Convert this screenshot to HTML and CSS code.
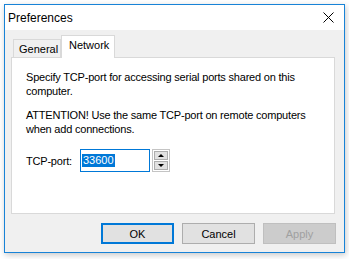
FILE: index.html
```html
<!DOCTYPE html>
<html lang="en">
<head>
<meta charset="UTF-8">
<title>Preferences</title>
<link rel="stylesheet" href="styles.css">
</head>
<body>

<div class="window">
    <!-- TITLE BAR -->
    <div class="titlebar">
        <span class="title">Preferences</span>
        <svg class="close" width="11" height="11" viewBox="0 0 11 11">
            <path d="M0.5 0.5 L10.5 10.5 M10.5 0.5 L0.5 10.5" stroke="#000" stroke-width="1" fill="none"/>
        </svg>
    </div>

    <!-- BODY -->
    <div class="body">
        <div class="tabs">
            <div class="tab">General</div>
            <div class="tab active">Network</div>
        </div>

        <div class="panel">
            <p>Specify TCP-port for accessing serial ports shared on this computer.</p>
            <p>ATTENTION! Use the same TCP-port on remote computers when add connections.</p>

            <div class="port-row">
                <label>TCP-port:</label>
                <div class="input"><span class="sel">33600</span></div>
                <div class="spin">
                    <div class="spin-btn"><span class="tri-up"></span></div>
                    <div class="spin-btn"><span class="tri-down"></span></div>
                </div>
            </div>
        </div>

        <div class="buttons">
            <div class="btn default">OK</div>
            <div class="btn">Cancel</div>
            <div class="btn disabled">Apply</div>
        </div>
    </div>
</div>

</body>
</html>
```

FILE: styles.css
```css
* {
    margin: 0;
    padding: 0;
    box-sizing: border-box;
}

html, body {
    width: 100%;
    height: 100%;
    background: #fff;
    font-family: 'Liberation Sans', Arial, sans-serif;
    font-size: 11px;
    color: #000;
    overflow: hidden;
}

body {
    padding: 4px 0 0 4px;
}

/* =======================
     WINDOW
======================== */
.window {
    width: 341px;
    height: 249px;
    border: 1px solid #1883d7;
    background: #f0f0f0;
    display: flex;
    flex-direction: column;
    box-shadow: 1px 2px 6px rgba(0,0,0,0.22);
}

.titlebar {
    height: 25px;
    background: #fff;
    display: flex;
    align-items: center;
    justify-content: space-between;
    padding: 0 10px 0 3px;
}

.title {
    font-size: 12px;
}

.close {
    display: block;
}

/* =======================
     BODY / TABS
======================== */
.body {
    flex: 1;
    display: flex;
    flex-direction: column;
    padding: 5px 9px 0 6px;
}

.tabs {
    display: flex;
    height: 22px;
    padding-left: 2px;
    align-items: flex-end;
    position: relative;
    z-index: 1;
}

.tab {
    height: 18px;
    width: 48px;
    border: 1px solid #d9d9d9;
    border-bottom: none;
    background: #f0f0f0;
    padding-left: 5px;
    line-height: 18px;
}

.tab.active {
    height: 23px;
    width: 54px;
    margin-bottom: -1px;
    background: #fff;
    line-height: 19px;
    padding-left: 7px;
}

.panel {
    height: 157px;
    background: #fff;
    border: 1px solid #d9d9d9;
    padding: 12px 14px 0 14px;
    line-height: 14px;
    letter-spacing: -0.2px;
}

.panel p {
    margin-bottom: 10px;
    width: 280px;
}

/* =======================
     PORT ROW
======================== */
.port-row {
    display: flex;
    align-items: center;
    margin-top: 13px;
}

.port-row label {
    flex: none;
    width: 54px;
}

.input {
    flex: none;
    width: 70px;
    height: 23px;
    border: 1px solid #0078d7;
    padding: 3px 1px;
    letter-spacing: 0;
}

.sel {
    display: inline-block;
    background: #0078d7;
    color: #fff;
    height: 13px;
    line-height: 13px;
    padding: 0 1px;
}

.spin {
    flex: none;
    width: 18px;
    height: 23px;
    margin-left: 2px;
    border: 1px solid #c4c4c4;
    padding: 1px;
    display: flex;
    flex-direction: column;
    gap: 1px;
}

.spin-btn {
    flex: 1;
    border: 1px solid #adadad;
    background: #e1e1e1;
    display: flex;
    align-items: center;
    justify-content: center;
}

.tri-up {
    border-left: 3px solid transparent;
    border-right: 3px solid transparent;
    border-bottom: 3px solid #000;
}

.tri-down {
    border-left: 3px solid transparent;
    border-right: 3px solid transparent;
    border-top: 3px solid #000;
}

/* =======================
     BUTTONS
======================== */
.buttons {
    display: flex;
    justify-content: flex-end;
    gap: 8px;
    margin-top: 9px;
    margin-right: -1px;
}

.btn {
    width: 73px;
    height: 21px;
    border: 1px solid #adadad;
    background: #e1e1e1;
    display: flex;
    align-items: center;
    justify-content: center;
}

.btn.default {
    border: 2px solid #0078d7;
}

.btn.disabled {
    background: #cccccc;
    border-color: #bfbfbf;
    color: #a0a0a0;
}
```
